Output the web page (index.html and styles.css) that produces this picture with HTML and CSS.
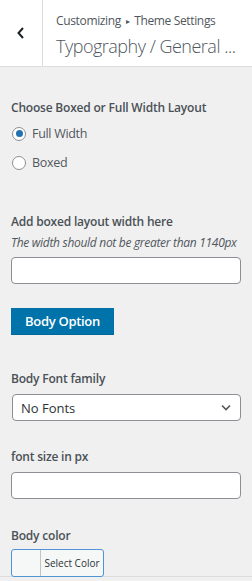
FILE: index.html
```html
<!DOCTYPE html>
<html>
<head>
<meta charset="utf-8">
<link rel="stylesheet" href="styles.css">
</head>
<body>
<div class="header">
  <div class="back">
    <svg width="10" height="14" viewBox="0 0 10 14"><polyline points="7,2 2.5,7 7,12" fill="none" stroke="#1d2327" stroke-width="2"/></svg>
  </div>
  <div class="titles">
    <div class="action">Customizing <span class="sep">&#9656;</span> Theme Settings</div>
    <div class="section">Typography / General ...</div>
  </div>
</div>
<div class="content">
  <div class="control c1">
    <div class="ctitle">Choose Boxed or Full Width Layout</div>
    <div class="radio-row first"><span class="radio checked"></span><span class="rlabel">Full Width</span></div>
    <div class="radio-row"><span class="radio"></span><span class="rlabel">Boxed</span></div>
  </div>
  <div class="control c2">
    <div class="ctitle">Add boxed layout width here</div>
    <div class="desc">The width should not be greater than 1140px</div>
    <div class="input"></div>
  </div>
  <div class="control c3">
    <div class="button">Body Option</div>
  </div>
  <div class="control c4">
    <div class="ctitle">Body Font family</div>
    <div class="select"><span>No Fonts</span>
      <svg width="10" height="7" viewBox="0 0 10 7"><polyline points="1,1.5 5,5.5 9,1.5" fill="none" stroke="#50575e" stroke-width="1.6"/></svg>
    </div>
  </div>
  <div class="control c5">
    <div class="ctitle">font size in px</div>
    <div class="input"></div>
  </div>
  <div class="control c6">
    <div class="ctitle">Body color</div>
    <div class="colorbtn"><span class="swatch"></span><span class="ctext">Select Color</span></div>
  </div>
</div>
<div class="footer"></div>
</body>
</html>
```
FILE: styles.css
```css
html, body {
  margin: 0;
  padding: 0;
  background: #f0f0f0;
  font-family: "Open Sans", "Noto Sans", sans-serif;
  color: #50575e;
  overflow: hidden;
  height: 581px;
}
.header {
  height: 66px;
  background: #fff;
  border-bottom: 1px solid #dcdcde;
  display: flex;
}
.back {
  width: 42px;
  flex: none;
  border-right: 1px solid #dcdcde;
  display: flex;
  align-items: center;
  justify-content: center;
}
.titles {
  padding: 12px 0 0 13px;
  white-space: nowrap;
  overflow: hidden;
}
.action {
  font-size: 12px;
  line-height: 18px;
  letter-spacing: -0.35px;
  color: #50575e;
}
.sep {
  font-size: 8px;
  position: relative;
  top: -1px;
  padding: 0 2px;
}
.section {
  font-size: 18px;
  font-weight: 300;
  line-height: 27px;
  letter-spacing: -0.5px;
  color: #50575e;
  margin-top: 2px;
}
.content {
  padding: 0 11px;
  height: 509px;
}
.control {
  display: flex;
  flex-direction: column;
}
.ctitle {
  font-size: 12px;
  font-weight: 600;
  line-height: 20px;
  letter-spacing: -0.2px;
  color: #4a5157;
  white-space: nowrap;
}
.c1 { padding-top: 31px; }
.radio-row {
  display: flex;
  align-items: center;
  height: 29px;
  margin-left: 1px;
}
.radio-row.first { margin-top: 1px; }
.radio {
  width: 14px;
  height: 14px;
  border-radius: 50%;
  border: 1px solid #8c8f94;
  background: #fff;
  box-sizing: border-box;
  display: flex;
  align-items: center;
  justify-content: center;
}
.radio.checked::after {
  content: "";
  width: 7px;
  height: 7px;
  border-radius: 50%;
  background: #2271b1;
}
.rlabel {
  font-size: 12.5px;
  letter-spacing: -0.3px;
  margin-left: 6px;
  color: #50575e;
}
.c2 { margin-top: 35px; }
.desc {
  font-size: 12px;
  font-style: italic;
  line-height: 18px;
  letter-spacing: -0.3px;
  color: #50575e;
  margin-top: 2px;
  white-space: nowrap;
}
.input {
  background: #fff;
  border: 1px solid #8c8f94;
  border-radius: 4px;
  box-sizing: border-box;
  height: 27px;
  margin-top: 5px;
}
.c3 { margin-top: 24px; }
.button {
  align-self: flex-start;
  width: 103px;
  height: 27px;
  background: #0073aa;
  color: #fff;
  font-size: 13px;
  font-weight: 600;
  line-height: 27px;
  letter-spacing: -0.3px;
  text-align: center;
  box-sizing: border-box;
  border-bottom: 1px solid #006799;
}
.c4 { margin-top: 34px; }
.select {
  height: 27px;
  margin-top: 5px;
  margin-left: 1px;
  background: #fff;
  border: 1px solid #8c8f94;
  border-radius: 4px;
  box-sizing: border-box;
  display: flex;
  align-items: center;
  justify-content: space-between;
  padding: 0 9px 0 8px;
  font-size: 13px;
  color: #2c3338;
}
.c5 { margin-top: 26px; }
.c6 { margin-top: 27px; }
.colorbtn {
  align-self: flex-start;
  width: 93px;
  height: 28px;
  margin-top: 3px;
  border: 1px solid #4f94d4;
  border-radius: 3px;
  box-sizing: border-box;
  display: flex;
  background: #f6f7f7;
}
.swatch {
  width: 28px;
  border-right: 1px solid #c3c4c7;
}
.ctext {
  flex: 1;
  font-size: 10px;
  line-height: 26px;
  text-align: center;
  color: #2c3338;
}
.footer {
  border-top: 1px solid #dcdcde;
}
```
